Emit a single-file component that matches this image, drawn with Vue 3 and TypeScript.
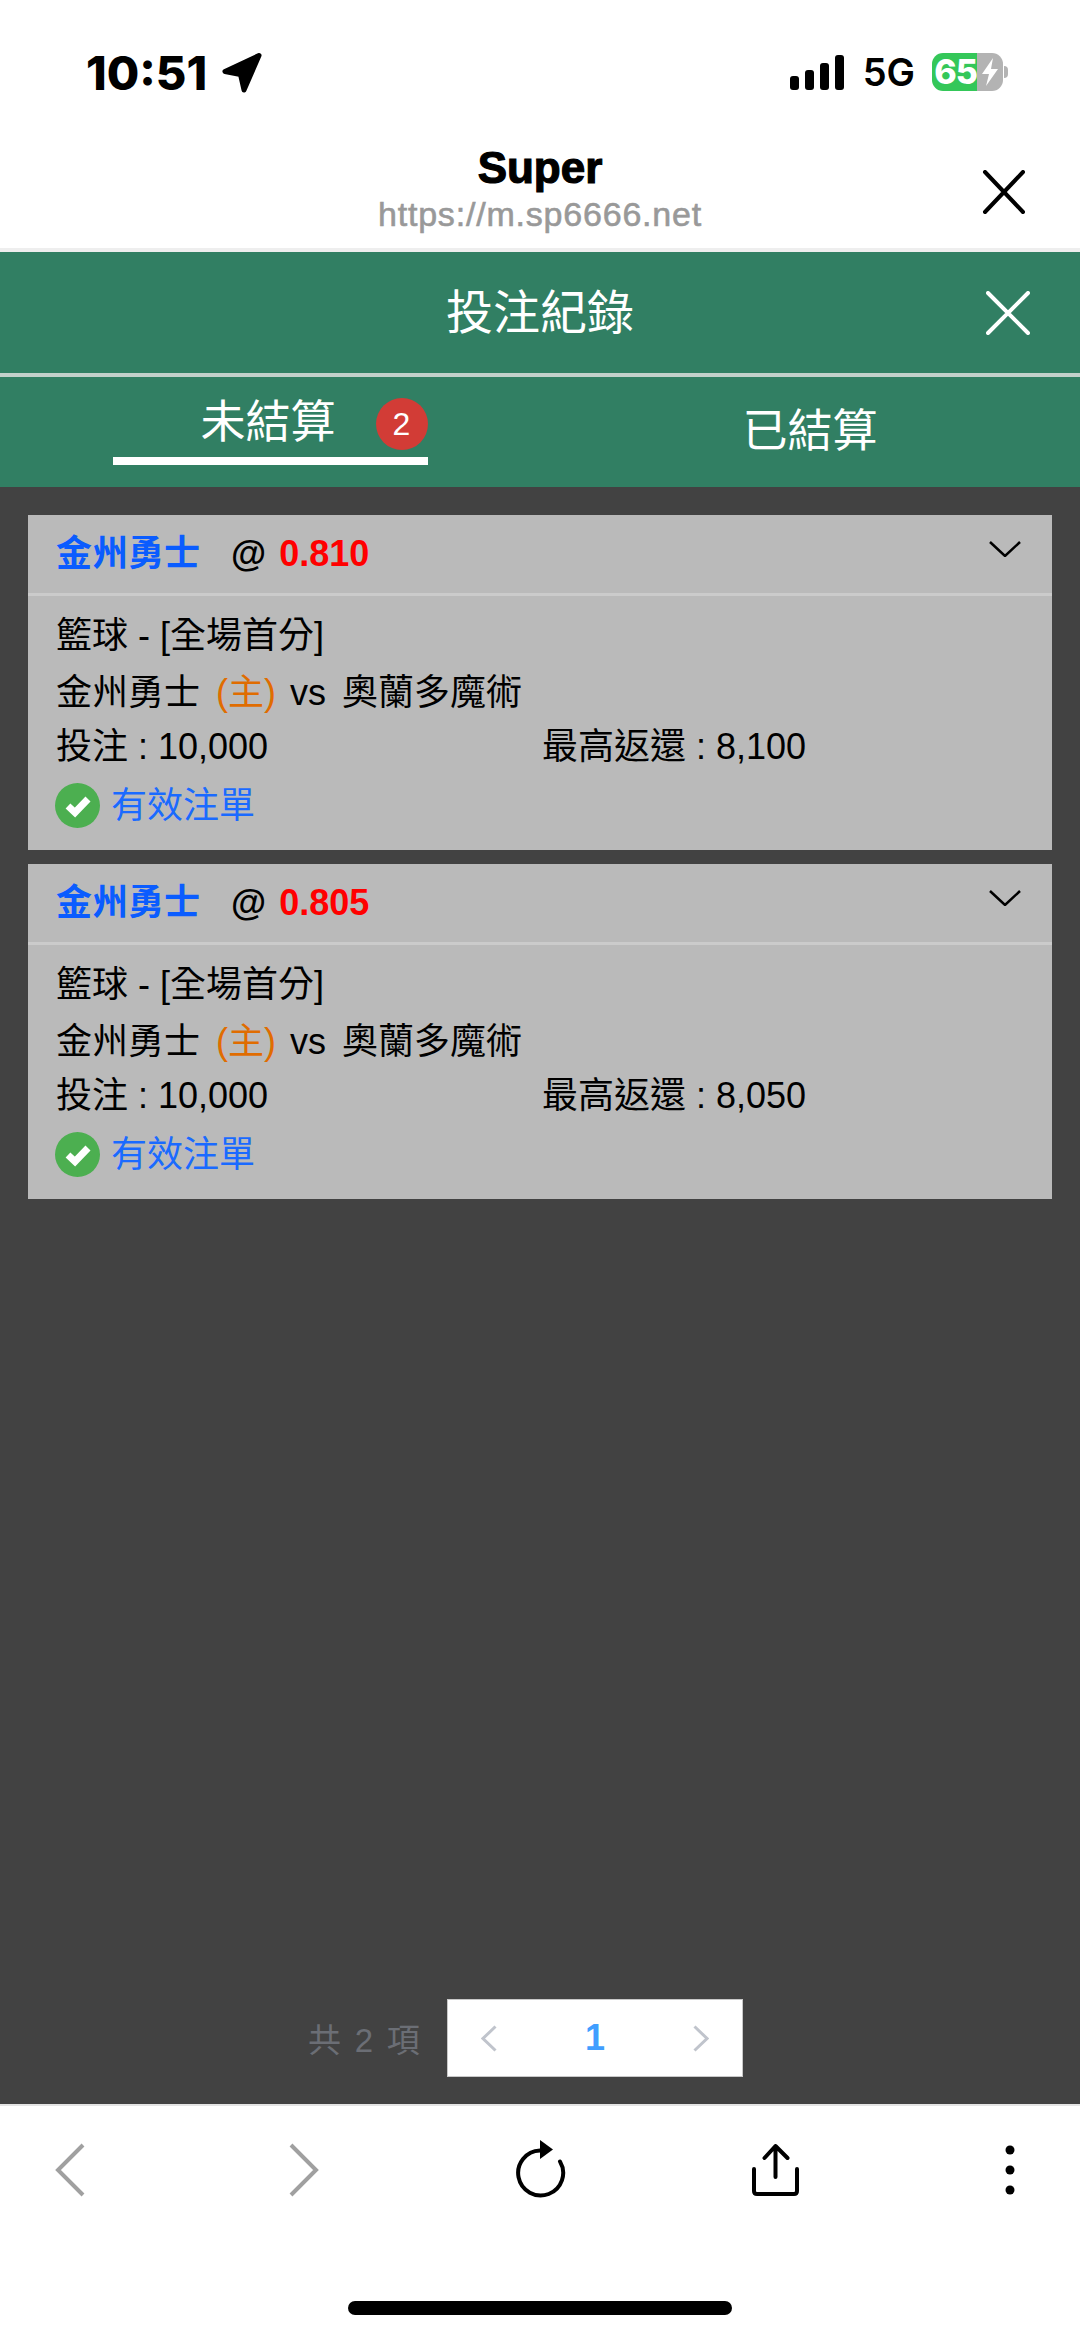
<template>
  <div class="phone">
    <div class="status">
      <div class="statusLeft">
        <span class="time">10:51</span>
        <svg class="locate" width="40" height="40" viewBox="0 0 40 40">
          <path d="M37 2.500 L3 18.500 L18.500 21.500 L22 37 Z" fill="#000" stroke="#000" stroke-width="5" stroke-linejoin="round" />
        </svg>
      </div>
      <div class="statusRight">
        <svg width="54" height="35" viewBox="0 0 54 35">
          <rect x="0" y="21" width="9" height="14" rx="3" />
          <rect x="15" y="15" width="9" height="20" rx="3" />
          <rect x="30" y="8" width="9" height="27" rx="3" />
          <rect x="45" y="0" width="9" height="35" rx="3" />
        </svg>
        <span class="network">5G</span>
        <div class="battery">
          <div class="batteryFill">65</div>
          <div class="batteryRest">
            <svg width="22" height="30" viewBox="0 0 22 30">
              <path d="M14 1 L3 17 L10 17 L7 29 L19 12 L12 12 Z" fill="#fff" />
            </svg>
          </div>
          <div class="batteryTip"></div>
        </div>
      </div>
    </div>

    <div class="browserBar">
      <div></div>
      <div class="browserTitle">
        <div class="siteName">Super</div>
        <div class="siteUrl">https://m.sp6666.net</div>
      </div>
      <svg class="browserClose" width="44" height="44" viewBox="0 0 44 44">
        <path d="M3 2 L41 42 M41 2 L3 42" stroke="#000" stroke-width="4" stroke-linecap="round" />
      </svg>
    </div>

    <div class="pageHeader">
      <div></div>
      <div class="pageTitle">投注紀錄</div>
      <svg class="pageClose" width="44" height="44" viewBox="0 0 44 44">
        <path d="M2 2 L42 42 M42 2 L2 42" stroke="#fff" stroke-width="4" stroke-linecap="round" />
      </svg>
    </div>

    <div class="tabs">
      <div class="tab">
        <div class="tabActive">
          <span class="tabText">未結算</span>
          <span class="badge">2</span>
        </div>
      </div>
      <div class="tab">
        <span class="tabOther">已結算</span>
      </div>
    </div>

    <div class="content">
      <div class="list">
        <div v-for="bet in bets" :key="bet.odds" class="card">
          <div class="cardHead">
            <span class="pick">金州勇士</span>
            <span class="at">@</span>
            <span class="odds">{{ bet.odds }}</span>
            <svg class="chevron" width="32" height="16" viewBox="0 0 32 16">
              <path d="M1 1 L16 15 L31 1" fill="none" stroke="#000" stroke-width="2.500" />
            </svg>
          </div>
          <div class="cardBody">
            <div class="line">籃球 - [全場首分]</div>
            <div class="line">金州勇士 <span class="home">(主)</span> vs <span class="away">奧蘭多魔術</span></div>
            <div class="line twoCol">
              <span>投注 : 10,000</span>
              <span>最高返還 : {{ bet.payout }}</span>
            </div>
            <div class="line valid">
              <svg width="45" height="45" viewBox="0 0 45 45">
                <circle cx="22.500" cy="22.500" r="22.500" fill="#4caf50" />
                <path d="M13 23 L20 29.500 L33 16" fill="none" stroke="#fff" stroke-width="7" />
              </svg>
              <span>有效注單</span>
            </div>
          </div>
        </div>
      </div>

      <div class="pagination">
        <span class="total">共 2 項</span>
        <div class="pager">
          <svg width="16" height="27" viewBox="0 0 16 27">
            <path d="M14.500 1.500 L2 13.500 L14.500 25.500" fill="none" stroke="#c0c4cc" stroke-width="3" />
          </svg>
          <span class="pageNum">1</span>
          <svg width="16" height="27" viewBox="0 0 16 27">
            <path d="M1.500 1.500 L14 13.500 L1.500 25.500" fill="none" stroke="#c0c4cc" stroke-width="3" />
          </svg>
        </div>
      </div>
    </div>

    <div class="bottomBar">
      <div class="toolbar">
        <svg width="32" height="54" viewBox="0 0 32 54">
          <path d="M29 2 L4 27 L29 52" fill="none" stroke="#a0a0a0" stroke-width="4" />
        </svg>
        <svg width="32" height="54" viewBox="0 0 32 54">
          <path d="M3 2 L28 27 L3 52" fill="none" stroke="#a0a0a0" stroke-width="4" />
        </svg>
        <svg class="reload" width="54" height="60" viewBox="0 0 54 60">
          <path d="M47 21.500 A22.500 22.500 0 1 1 27 10.500" fill="none" stroke="#000" stroke-width="4" stroke-linecap="round" />
          <path d="M27 0 L40 9.500 L27 19 Z" fill="#000" />
        </svg>
        <svg width="50" height="54" viewBox="0 0 50 54">
          <path d="M24.500 34 L24.500 3 M13.500 15 L24.500 3 L36.500 15" fill="none" stroke="#000" stroke-width="4" stroke-linecap="round" stroke-linejoin="round" />
          <path d="M3 26 L3 48 Q3 51 6 51 L43 51 Q46 51 46 48 L46 26" fill="none" stroke="#000" stroke-width="4" stroke-linecap="round" />
        </svg>
        <svg class="more" width="10" height="50" viewBox="0 0 10 50">
          <circle cx="5" cy="5" r="4.500" />
          <circle cx="5" cy="25" r="4.500" />
          <circle cx="5" cy="45" r="4.500" />
        </svg>
      </div>
      <div class="homeIndicator"></div>
    </div>
  </div>
</template>

<script setup lang="ts">
interface Bet {
  odds: string
  payout: string
}

const bets: Bet[] = [
  { odds: '0.810', payout: '8,100' },
  { odds: '0.805', payout: '8,050' },
]
</script>

<style>
html,
body {
  margin: 0;
  background: #fff;
}
</style>

<style scoped>
.phone {
  width: 1080px;
  height: 2337px;
  display: flex;
  flex-direction: column;
  overflow: hidden;
  background: #fff;
  color: #000;
  font-family: "Liberation Sans", "Noto Sans CJK TC", sans-serif;
}

.status {
  height: 128px;
  flex: none;
  box-sizing: border-box;
  padding: 53px 72px 0 86px;
  display: flex;
  justify-content: space-between;
  align-items: flex-start;
}

.statusLeft {
  display: flex;
  align-items: center;
  height: 39px;
  gap: 15px;
}

.time {
  font-family: Inter, "Liberation Sans", sans-serif;
  font-size: 47px;
  font-weight: 800;
  line-height: 39px;
}

.statusRight {
  display: flex;
  align-items: center;
  height: 38px;
}

.statusRight > svg {
  margin: 0 19px 0 3px;
}

.network {
  font-family: Inter, "Liberation Sans", sans-serif;
  font-size: 38px;
  font-weight: 600;
  line-height: 38px;
  margin-right: 17px;
}

.battery {
  display: flex;
  align-items: center;
  height: 38px;
}

.batteryFill {
  width: 45px;
  height: 38px;
  background: #34c759;
  border-radius: 11px 0 0 11px;
  color: #fff;
  font-family: Inter, "Liberation Sans", sans-serif;
  font-size: 34px;
  font-weight: 800;
  line-height: 38px;
  text-align: right;
  letter-spacing: -1px;
  white-space: nowrap;
}

.batteryRest {
  width: 26px;
  height: 38px;
  background: #b3b3b3;
  border-radius: 0 11px 11px 0;
  display: flex;
  align-items: center;
  justify-content: center;
}

.batteryTip {
  width: 4px;
  height: 12px;
  background: #b3b3b3;
  border-radius: 0 4px 4px 0;
  margin-left: 1px;
}

.browserBar {
  height: 124px;
  flex: none;
  box-sizing: border-box;
  border-bottom: 4px solid #eeeeee;
  display: grid;
  grid-template-columns: 1fr auto 1fr;
}

.browserTitle {
  text-align: center;
  padding-top: 14px;
}

.siteName {
  font-size: 44px;
  font-weight: 700;
  line-height: 51px;
  -webkit-text-stroke: 1.2px #000;
}

.siteUrl {
  font-size: 34px;
  line-height: 42px;
  color: #999;
  letter-spacing: 0.8px;
  -webkit-text-stroke: 0.6px #999;
}

.browserClose {
  justify-self: end;
  margin: 42px 54px 0 0;
}

.pageHeader {
  height: 121px;
  flex: none;
  background: #317f63;
  display: grid;
  grid-template-columns: 1fr auto 1fr;
  align-items: center;
}

.pageTitle {
  color: #fff;
  font-size: 47px;
  line-height: 60px;
}

.pageClose {
  justify-self: end;
  margin-right: 50px;
}

.tabs {
  height: 114px;
  flex: none;
  box-sizing: border-box;
  border-top: 4px solid #c3d1cb;
  background: #317f63;
  display: grid;
  grid-template-columns: 540px 540px;
  color: #fff;
  font-size: 45px;
}

.tab {
  display: flex;
  justify-content: center;
  align-items: flex-start;
}

.tabActive {
  width: 315px;
  height: 88px;
  box-sizing: border-box;
  border-bottom: 8px solid #fff;
  display: flex;
  justify-content: flex-end;
  align-items: flex-start;
  line-height: 62px;
  gap: 40px;
  padding-top: 21px;
}

.tabText {
  margin-top: -6px;
}

.badge {
  width: 52px;
  height: 52px;
  border-radius: 50%;
  background: #d23c36;
  font-size: 32px;
  line-height: 52px;
  text-align: center;
}

.tabOther {
  line-height: 62px;
  margin-top: 24px;
}

.content {
  flex: 1;
  min-height: 0;
  display: flex;
  flex-direction: column;
  background: #424242;
  padding-top: 28px;
}

.list {
  flex: 1;
  padding: 0 28px;
  display: flex;
  flex-direction: column;
  gap: 14px;
}

.card {
  height: 335px;
  background: #bababa;
  font-size: 36px;
}

.cardHead {
  height: 81px;
  box-sizing: border-box;
  border-bottom: 3px solid #cbcbcb;
  padding: 0 33px 0 28px;
  display: flex;
  align-items: center;
  font-weight: 700;
  line-height: 50px;
}

.pick {
  color: #0a5cff;
  margin-right: 31px;
}

.at {
  margin-right: 13px;
}

.odds {
  color: #f00;
}

.chevron {
  margin-left: auto;
  margin-top: -11px;
  margin-right: -2px;
}

.cardBody {
  padding: 11px 28px 0;
}

.line {
  height: 57px;
  line-height: 57px;
  white-space: nowrap;
}

.home {
  color: #e06c00;
  margin: 0 4px 0 6px;
}

.away {
  margin-left: 6px;
}

.twoCol {
  display: grid;
  grid-template-columns: 486px auto;
  margin-top: -3px;
  margin-bottom: 2px;
}

.valid {
  display: flex;
  align-items: center;
  gap: 11px;
  color: #1a6aff;
  margin-left: -1px;
}

.pagination {
  display: flex;
  align-items: center;
  padding-left: 308px;
  margin-bottom: 27px;
}

.total {
  width: 139px;
  color: #6b6e75;
  font-size: 33px;
  word-spacing: 4.5px;
  white-space: nowrap;
}

.pager {
  width: 296px;
  height: 78px;
  box-sizing: border-box;
  border: 1px solid #c8c8c8;
  background: #fff;
  padding: 0 33px;
  display: flex;
  align-items: center;
  justify-content: space-between;
}

.pageNum {
  color: #409eff;
  font-size: 36px;
  font-weight: 700;
}

.bottomBar {
  height: 233px;
  flex: none;
  box-sizing: border-box;
  border-top: 2px solid #e4e4e4;
  background: #fff;
  display: flex;
  flex-direction: column;
}

.toolbar {
  height: 195px;
  display: grid;
  grid-template-columns: 234px 225px 238px 254px auto;
  padding: 37px 0 0 54px;
  box-sizing: border-box;
  align-items: start;
}

.reload {
  margin-top: -3px;
}

.more {
  margin-top: 2px;
}

.homeIndicator {
  width: 384px;
  height: 14px;
  border-radius: 7px;
  background: #000;
  align-self: center;
}
</style>
